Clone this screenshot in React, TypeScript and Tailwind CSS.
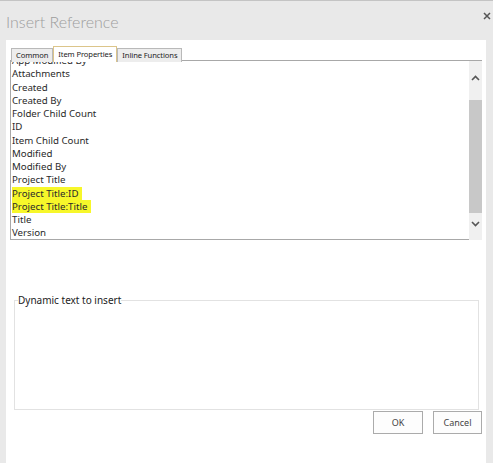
import React from 'react'

const fields = [
  'App Modified By',
  'Attachments',
  'Created',
  'Created By',
  'Folder Child Count',
  'ID',
  'Item Child Count',
  'Modified',
  'Modified By',
  'Project Title',
  'Project Title:ID',
  'Project Title:Title',
  'Title',
  'Version',
]

const marked = ['Project Title:ID', 'Project Title:Title']

function Chevron({ up }: { up?: boolean }) {
  return (
    <svg width="9" height="6" viewBox="0 0 9 6" className="mx-auto">
      <path
        d={up ? 'M1 5 L4.5 1.5 L8 5' : 'M1 1 L4.5 4.5 L8 1'}
        fill="none"
        stroke="#555"
        strokeWidth="1.6"
      />
    </svg>
  )
}

function Tab({ label, active }: { label: string; active?: boolean }) {
  return (
    <div
      className={`${
        active
          ? 'h-[16px] border-[#dcc58a] bg-white'
          : 'h-[14px] border-[#b9b9b9] bg-[#ededed]'
      } flex items-center border border-b-0 px-[4px] text-[7.6px] leading-none tracking-[-0.1px] text-[#222]`}
    >
      {label}
    </div>
  )
}

export default function App() {
  return (
    <div className="flex h-[463px] w-[493px] flex-col border-t border-[#c4c4c4] bg-[#e9e9e9] font-['Noto_Sans',sans-serif]">
      <div className="flex h-[39px] items-start justify-between pl-[6px] pr-[2px]">
        <h1 className="mt-[9px] font-['Lato',sans-serif] text-[16px] font-light text-[#9d9d9d]">
          Insert Reference
        </h1>
        <svg width="8" height="8" viewBox="0 0 8 8" className="mt-[11px]">
          <path d="M1 1 L7 7 M7 1 L1 7" stroke="#555" strokeWidth="1.5" />
        </svg>
      </div>

      <div className="ml-[6px] mr-[7px] flex flex-1 flex-col bg-white px-[4px] pt-[6px]">
        <div className="relative z-10 flex h-[16px] items-end pl-px">
          <Tab label="Common" />
          <Tab label="Item Properties" active />
          <Tab label="Inline Functions" />
        </div>

        <div className="-mt-[2px] flex h-[180px] border-l border-t border-[#a8a8a8]">
          <div className="flex-1 overflow-hidden border-b border-[#a8a8a8]">
            <ul className="-mt-[7px] pl-px text-[9.7px] leading-[13.25px] text-[#2a2a2a]">
              {fields.map((f) => (
                <li key={f}>
                  <span
                    className={
                      marked.includes(f) ? 'inline-block bg-[#f7f72a] pr-[4px]' : ''
                    }
                  >
                    {f}
                  </span>
                </li>
              ))}
            </ul>
          </div>
          <div className="flex w-[13px] flex-col bg-[#f0f0f0]">
            <div className="h-[39px] pt-[14px]">
              <Chevron up />
            </div>
            <div className="h-[113px] bg-[#c8c8c8]" />
            <div className="pt-[8px]">
              <Chevron />
            </div>
          </div>
        </div>

        <fieldset className="ml-[4px] mr-[3px] mt-[54px] h-[116px] border border-[#e2e2e2] px-[3px]">
          <legend className="text-[10px] leading-[12px] text-[#222]">
            Dynamic text to insert
          </legend>
        </fieldset>

        <div className="flex justify-end gap-[10px] pt-px">
          <button className="h-[23px] w-[50px] border border-[#ababab] bg-[#fdfdfd] text-[9px] text-[#444]">
            OK
          </button>
          <button className="h-[23px] w-[49px] border border-[#ababab] bg-[#fdfdfd] text-[9px] text-[#444]">
            Cancel
          </button>
        </div>
      </div>
    </div>
  )
}
